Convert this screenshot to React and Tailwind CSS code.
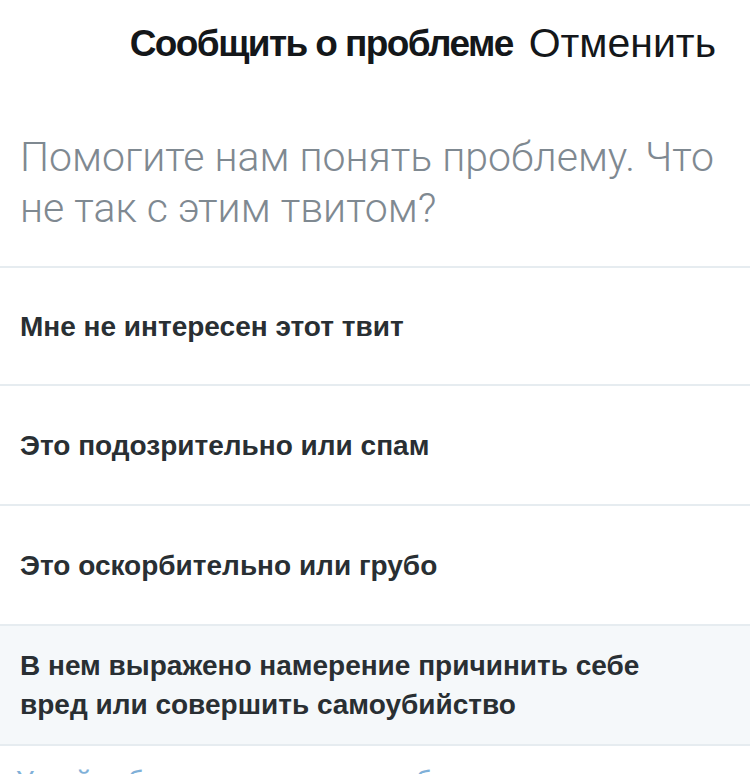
const options = [
  "Мне не интересен этот твит",
  "Это подозрительно или спам",
  "Это оскорбительно или грубо",
];

function OptionRow({ label, first }) {
  return (
    <div
      className={
        "flex items-center px-5 border-b-2 border-[#e6ecf0] bg-white " +
        (first ? "h-[118px]" : "h-[120px]")
      }
    >
      <span className="text-[28px] leading-[39px] font-bold text-[#292f33]">
        {label}
      </span>
    </div>
  );
}

export default function App() {
  return (
    <div
      className="w-[750px] h-[774px] overflow-hidden bg-white"
      style={{ fontFamily: '"Liberation Sans", Arial, sans-serif' }}
    >
      <div className="flex items-center justify-end gap-[16px] h-[88px] pr-[34px]">
        <h1 className="text-[37px] font-bold tracking-[-1.6px] text-[#14171a]">
          Сообщить о проблеме
        </h1>
        <button className="text-[41px] text-[#14171a]">Отменить</button>
      </div>

      <div className="pt-[44px] pb-[32px] px-5 border-b-2 border-[#e6ecf0]">
        <p className="font-['Roboto'] font-light text-[41px] leading-[51px] text-[#7f8991]">
          Помогите нам понять проблему. Что не так с этим твитом?
        </p>
      </div>

      {options.map((o, i) => (
        <OptionRow key={o} label={o} first={i === 0} />
      ))}

      <div className="flex items-center h-[120px] px-5 border-b-2 border-[#e6ecf0] bg-[#f5f8fa]">
        <span className="text-[28px] leading-[39px] font-bold text-[#292f33]">
          В нем выражено намерение причинить себе
          <br />
          вред или совершить самоубийство
        </span>
      </div>

      <div className="px-4 pt-[14px]">
        <a className="text-[28px] text-[#7fb0d8]">
          Узнайте больше о том, как сообщать о нарушениях. Подробнее
        </a>
      </div>
    </div>
  );
}
